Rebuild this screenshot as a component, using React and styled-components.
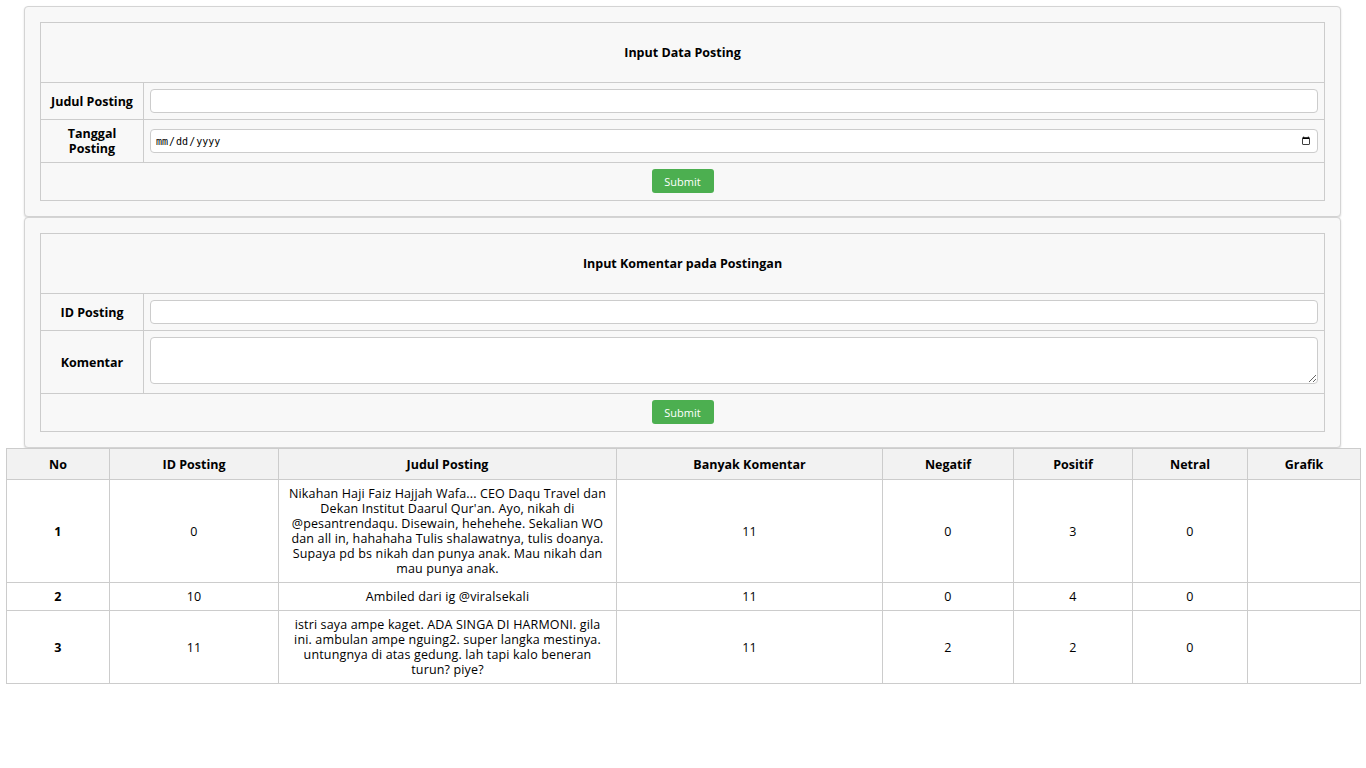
import React from 'react';
import styled, { createGlobalStyle } from 'styled-components';

const GlobalStyle = createGlobalStyle`
  body {
    margin: 0;
    background: #fff;
    font-family: 'Open Sans', 'Liberation Sans', sans-serif;
    font-size: 12.5px;
    color: #000;
  }
`;

const Page = styled.div`
  padding: 6px 6px 0;
`;

const Card = styled.div`
  margin: 0 19px 0 18px;
  padding: 15px;
  background: #f8f8f8;
  border: 1px solid #d4d4d4;
  border-radius: 4px;
  box-shadow: 0 1px 2px rgba(0, 0, 0, 0.15);
`;

const FormTable = styled.table`
  width: 100%;
  border-collapse: collapse;
  background: #f8f8f8;

  td, th {
    border: 1px solid #ccc;
    padding: 6px;
  }
`;

const TitleCell = styled.th`
  height: 47px;
  font-weight: 700;
  text-align: center;
`;

const LabelCell = styled.th`
  width: 90px;
  font-weight: 700;
  text-align: center;
  line-height: 15px;
`;

const TextInput = styled.input`
  box-sizing: border-box;
  width: 100%;
  height: 24px;
  border: 1px solid #ccc;
  border-radius: 4px;
  background: #fff;
  padding: 0 4px;
  display: block;
`;

const DateInput = styled(TextInput)`
  font-size: 10px;
  font-family: 'DejaVu Sans Mono', monospace;
  color: #000;
`;

const TextArea = styled.textarea`
  box-sizing: border-box;
  width: 100%;
  height: 47px;
  margin-bottom: 3px;
  border: 1px solid #ccc;
  border-radius: 4px;
  background: #fff;
  display: block;
  resize: vertical;
`;

const SubmitCell = styled.td`
  text-align: center;
  height: 24px;
  && {
    padding: 6px 6px 7px;
  }
`;

const SubmitButton = styled.button`
  background: #4caf50;
  color: #fff;
  border: none;
  border-radius: 3px;
  width: 62px;
  height: 24px;
  display: inline-block;
  vertical-align: top;
  font-family: 'Open Sans', sans-serif;
  font-size: 11px;
  cursor: pointer;
`;

const DataTable = styled.table`
  width: 100%;
  border-collapse: collapse;
  table-layout: fixed;

  th, td {
    border: 1px solid #ccc;
    text-align: center;
    padding: 6px 8px;
    line-height: 15px;
  }

  td {
    letter-spacing: 0.15px;
  }

  th {
    background: #f2f2f2;
    font-weight: 700;
    height: 18px;
  }
`;

const NoCell = styled.td`
  font-weight: 700;
`;

const columns = [
  ['No', 103],
  ['ID Posting', 169],
  ['Judul Posting', 338],
  ['Banyak Komentar', 266],
  ['Negatif', 131],
  ['Positif', 119],
  ['Netral', 115],
  ['Grafik', 113],
];

const rows = [
  {
    id: 0,
    judul:
      "Nikahan Haji Faiz Hajjah Wafa... CEO Daqu Travel dan Dekan Institut Daarul Qur'an. Ayo, nikah di @pesantrendaqu. Disewain, hehehehe. Sekalian WO dan all in, hahahaha Tulis shalawatnya, tulis doanya. Supaya pd bs nikah dan punya anak. Mau nikah dan mau punya anak.",
    komentar: 11,
    neg: 0,
    pos: 3,
    net: 0,
  },
  { id: 10, judul: 'Ambiled dari ig @viralsekali', komentar: 11, neg: 0, pos: 4, net: 0 },
  {
    id: 11,
    judul:
      'istri saya ampe kaget. ADA SINGA DI HARMONI. gila ini. ambulan ampe nguing2. super langka mestinya. untungnya di atas gedung. lah tapi kalo beneran turun? piye?',
    komentar: 11,
    neg: 2,
    pos: 2,
    net: 0,
  },
];

export default function App() {
  return (
    <Page>
      <GlobalStyle />
      <Card>
        <FormTable>
          <tbody>
            <tr>
              <TitleCell colSpan={2}>Input Data Posting</TitleCell>
            </tr>
            <tr>
              <LabelCell>Judul Posting</LabelCell>
              <td><TextInput type="text" /></td>
            </tr>
            <tr>
              <LabelCell>Tanggal Posting</LabelCell>
              <td><DateInput type="date" /></td>
            </tr>
            <tr>
              <SubmitCell colSpan={2}><SubmitButton>Submit</SubmitButton></SubmitCell>
            </tr>
          </tbody>
        </FormTable>
      </Card>
      <Card>
        <FormTable>
          <tbody>
            <tr>
              <TitleCell colSpan={2}>Input Komentar pada Postingan</TitleCell>
            </tr>
            <tr>
              <LabelCell>ID Posting</LabelCell>
              <td><TextInput type="text" /></td>
            </tr>
            <tr>
              <LabelCell>Komentar</LabelCell>
              <td><TextArea /></td>
            </tr>
            <tr>
              <SubmitCell colSpan={2}><SubmitButton>Submit</SubmitButton></SubmitCell>
            </tr>
          </tbody>
        </FormTable>
      </Card>
      <DataTable>
        <colgroup>
          {columns.map(([name, w]) => <col key={name} style={{ width: w }} />)}
        </colgroup>
        <thead>
          <tr>
            {columns.map(([name]) => <th key={name}>{name}</th>)}
          </tr>
        </thead>
        <tbody>
          {rows.map((r, i) => (
            <tr key={r.id}>
              <NoCell>{i + 1}</NoCell>
              <td>{r.id}</td>
              <td>{r.judul}</td>
              <td>{r.komentar}</td>
              <td>{r.neg}</td>
              <td>{r.pos}</td>
              <td>{r.net}</td>
              <td></td>
            </tr>
          ))}
        </tbody>
      </DataTable>
    </Page>
  );
}
